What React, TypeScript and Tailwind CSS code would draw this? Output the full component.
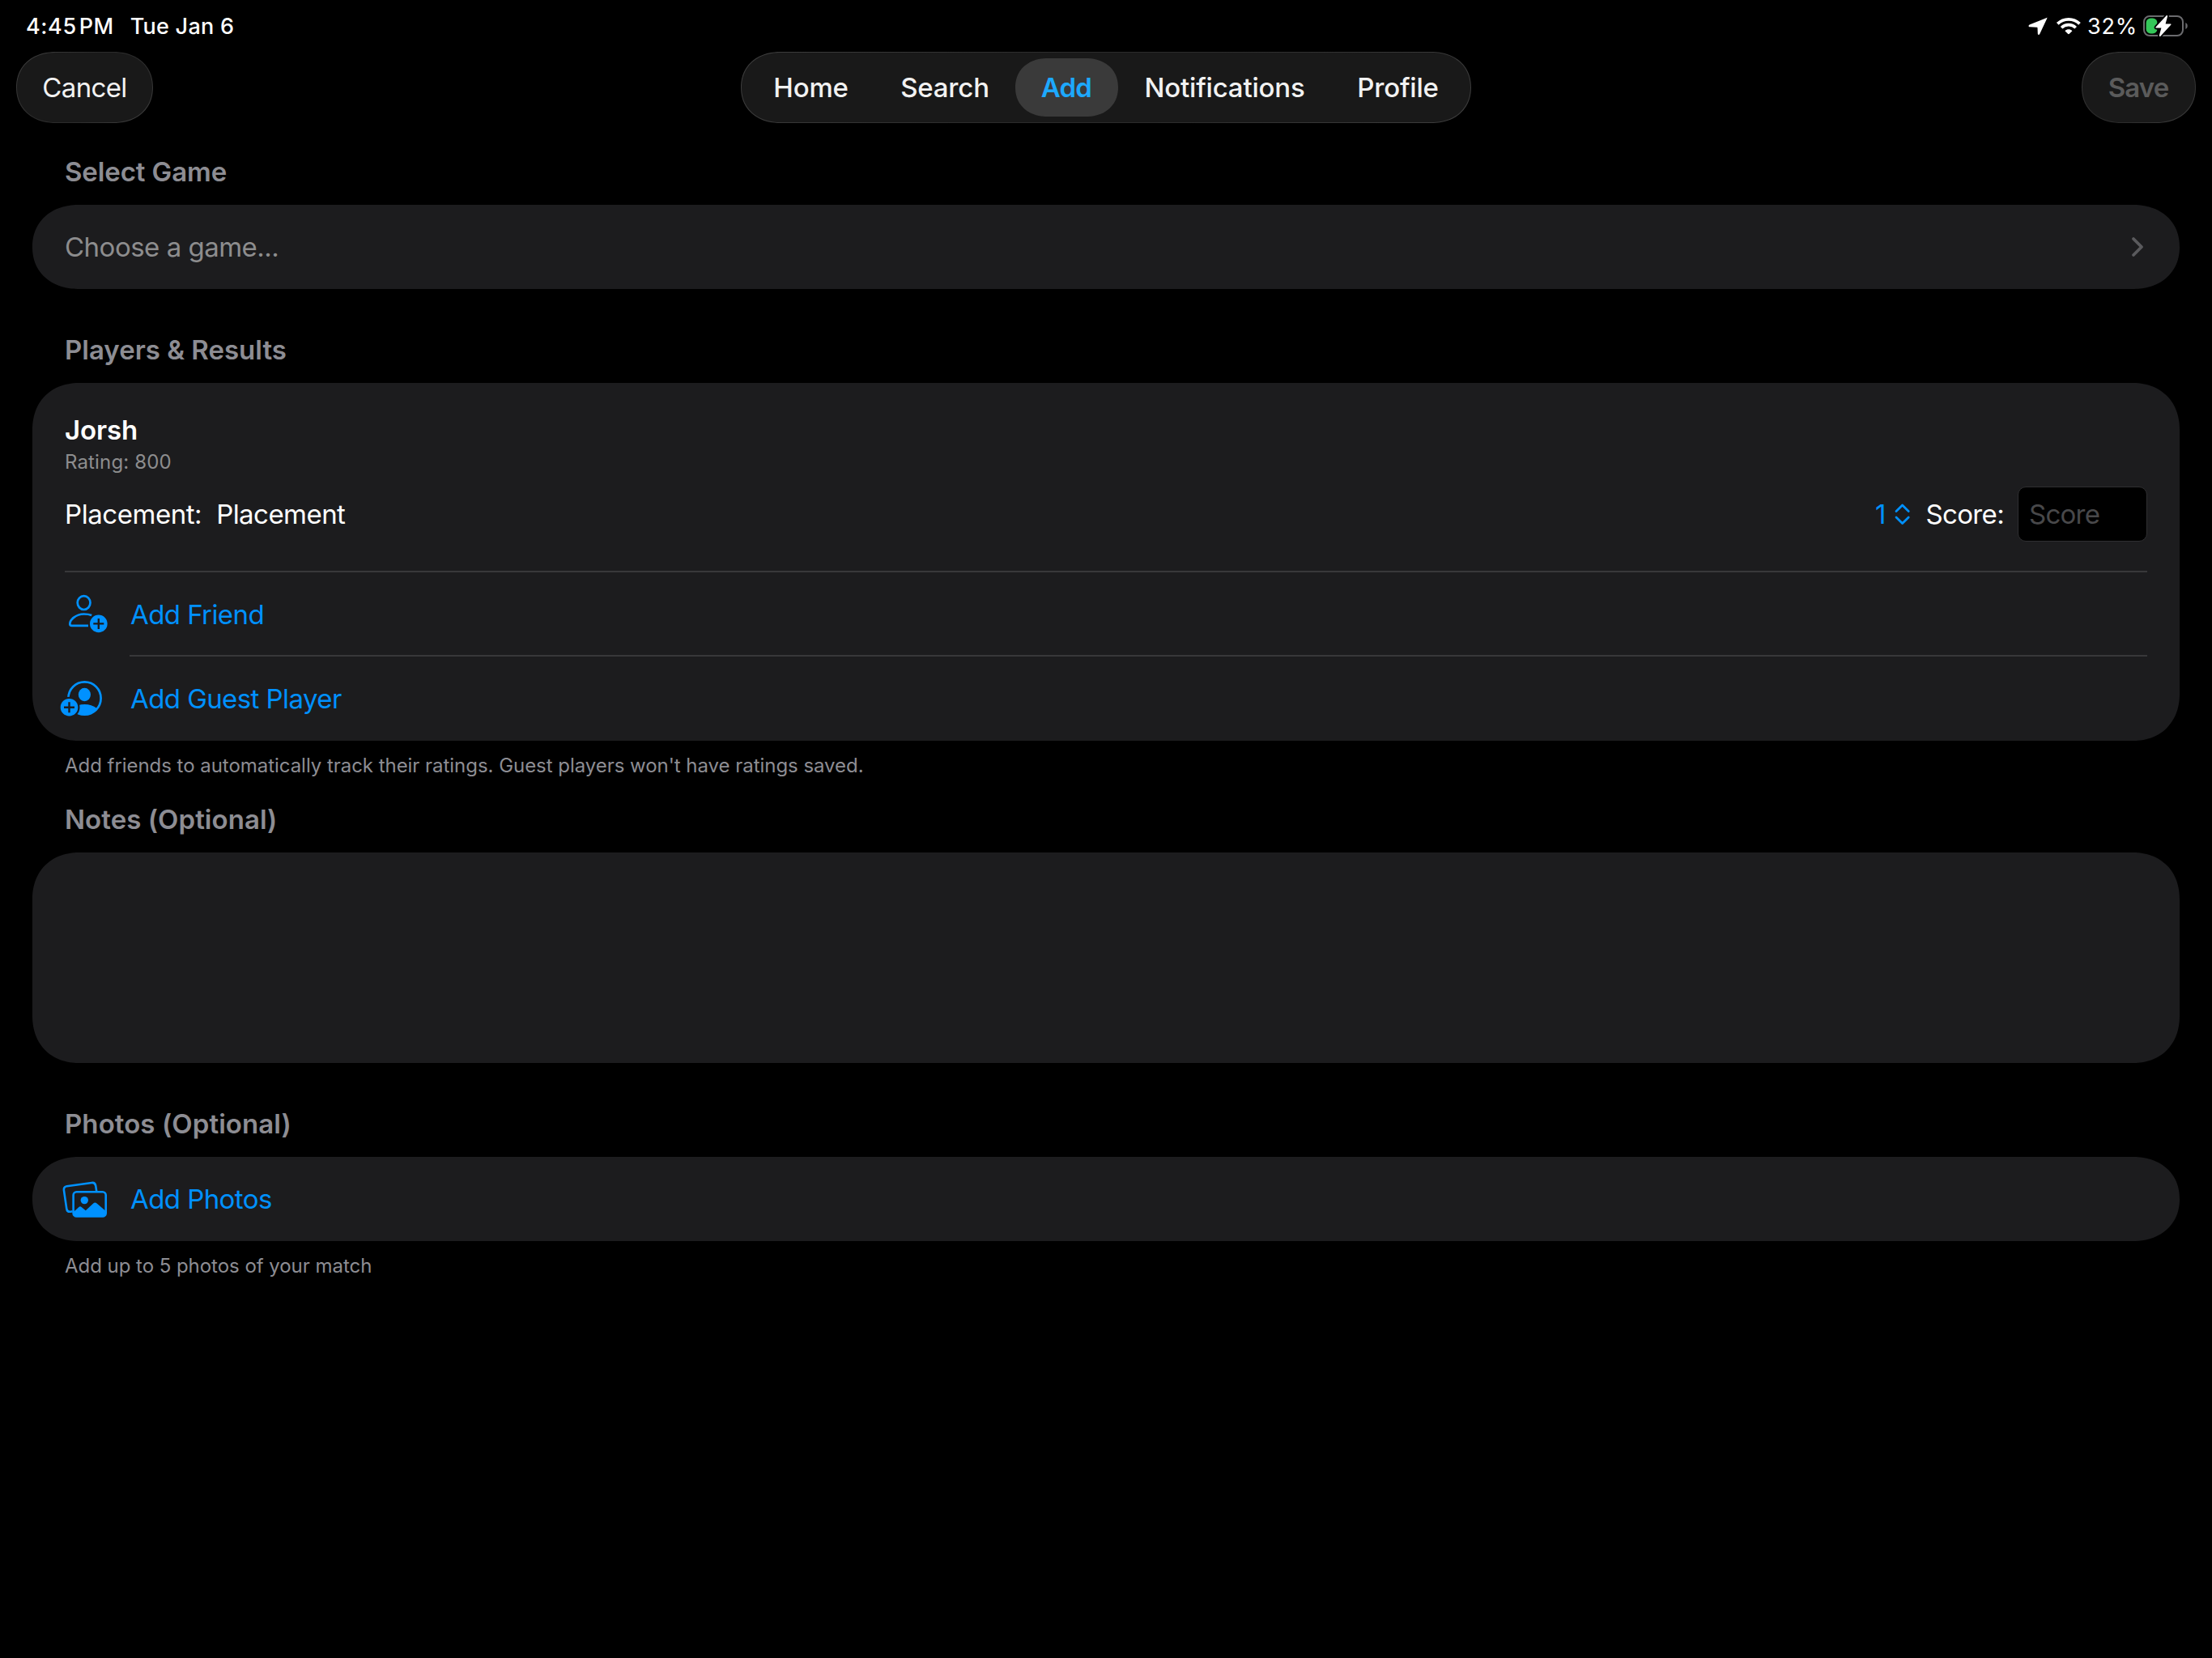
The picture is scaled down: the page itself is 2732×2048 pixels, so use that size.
import type { ReactNode } from 'react'

const glass =
  'border-[1.5px] border-transparent [background:linear-gradient(#191919,#191919)_padding-box,linear-gradient(135deg,#3e3e3e,#2b2b2b_40%,#2b2b2b_60%,#3e3e3e)_border-box] rounded-[49px/44px] [corner-shape:superellipse(1.12)]'

const tabs = [
  { label: 'Home', width: 'w-[158px]' },
  { label: 'Search', width: 'w-[173px]' },
  { label: 'Add', width: 'w-[127px]', active: true },
  { label: 'Notifications', width: 'w-[264px]' },
  { label: 'Profile', width: 'w-[164px]' },
]

function StatusBar() {
  return (
    <div className="flex h-16 items-center justify-between pl-8 pr-7 text-[27px] font-[480] leading-8">
      <div className="flex pt-px">
        <span className="tracking-[0.6px]">4:45</span>
        <span className="ml-[3px] tracking-[0.5px]">PM</span>
        <span className="ml-5 tracking-[0.25px]">Tue Jan 6</span>
      </div>
      <div className="flex items-center">
        <svg width="66" height="32" viewBox="0 0 66 32" fill="none">
          <path
            d="M22.9 5.9 1.6 14.6C-.1 15.4.3 17.2 2.1 17.3L10.7 17.7C11.3 17.7 11.5 17.9 11.5 18.5L11.8 25.8C11.9 27.2 13.5 27.4 14.2 26L22.9 7.4C23.6 6 23.6 5.6 22.9 5.9Z"
            fill="#fff"
          />
          <g stroke="#fff" strokeWidth="3.7">
            <path d="M36.3 13.4C43.8 5.9 56 5.9 63.5 13.4" />
            <path d="M41.1 18.3C46 13.5 53.8 13.5 58.7 18.3" />
          </g>
          <path d="M49 25.8 45.4 22.2C48 19.6 51.8 19.6 54.4 22.2L50.8 25.8C50.2 26.4 49.6 26.4 49 25.8Z" fill="#fff" />
        </svg>
        <span className="ml-[7px] pt-px font-[440] tracking-[0.8px]">32%</span>
        <svg className="ml-[6px]" width="58" height="32" viewBox="0 0 58 32" fill="none">
          <rect x="2" y="4" width="48" height="24" rx="7" stroke="#6b6b6e" strokeWidth="2" />
          <path d="M53.3 12C56.6 13.2 56.6 18.8 53.3 20Z" fill="#6b6b6e" />
          <rect x="4.6" y="6.6" width="13.8" height="18.8" rx="5.5" fill="#34c759" />
          <path
            d="M29.4 3.4 16.7 17.2C16.1 18 16.4 18.6 17.3 18.6H23.4L20.9 27.6C20.6 29 21.6 29.5 22.6 28.4L35.2 14.8C35.9 14 35.5 13.4 34.6 13.4H28.6L31 4.4C31.3 3 30.3 2.5 29.4 3.4Z"
            fill="#fff"
            stroke="#000"
            strokeWidth="3.6"
            paintOrder="stroke"
          />
        </svg>
      </div>
    </div>
  )
}

function NavBar() {
  return (
    <div className="grid h-[88px] grid-cols-[1fr_auto_1fr] px-5 text-[33px] leading-10 text-[#f2f2f2]">
      <button className={`${glass} h-[88px] w-[169px] tracking-[-0.62px]`}>Cancel</button>
      <nav className={`${glass} flex h-[88px] w-[902px] items-center justify-center font-medium tracking-[-0.2px]`}>
        {tabs.map((t) => (
          <button
            key={t.label}
            className={`h-[72px] pr-px ${t.width} ${
              t.active
                ? 'rounded-[40px/36px] bg-[#3a3a3a] font-semibold tracking-[-0.8px] text-[#1da9ff] [corner-shape:superellipse(1.12)]'
                : ''
            }`}
          >
            {t.label}
          </button>
        ))}
      </nav>
      <button className={`${glass} h-[88px] w-[141px] justify-self-end pr-px font-semibold tracking-[-0.85px] text-[#5b5b5b]`}>
        Save
      </button>
    </div>
  )
}

function SectionHeader({ children, className = '' }: { children: ReactNode; className?: string }) {
  return (
    <h2 className={`mb-[17px] h-12 px-10 text-[33px] font-semibold leading-[48px] text-[#8d8d93] ${className}`}>
      {children}
    </h2>
  )
}

function Footer({ children }: { children: ReactNode }) {
  return <p className="mt-[15px] h-8 px-10 text-[24px] leading-8 tracking-[-0.04px] text-[#8d8d93]">{children}</p>
}

function PersonAddIcon() {
  return (
    <svg width="88" height="56" viewBox="0 0 88 56" fill="none" stroke="#0091ff" strokeWidth="2.7">
      <ellipse cx="31.6" cy="13.6" rx="7.9" ry="8.4" />
      <path d="M41.2 29C38.4 27.9 35 27.5 31.6 27.5C21 27.5 14.3 35.2 14.3 39.4C14.3 41 15.1 41.8 16.6 41.8H37" />
      <circle cx="49.8" cy="39.4" r="10.8" fill="#0091ff" stroke="none" />
      <path d="M43.3 39.4H56.3M49.8 32.9V45.9" stroke="#1c1c1e" strokeWidth="2.4" />
    </svg>
  )
}

function GuestAddIcon() {
  return (
    <svg width="88" height="56" viewBox="0 0 88 56" fill="none">
      <defs>
        <clipPath id="guest-ring">
          <circle cx="32.5" cy="27.5" r="20.6" />
        </clipPath>
      </defs>
      <circle cx="32.5" cy="27.5" r="20.1" stroke="#0091ff" strokeWidth="2.7" />
      <ellipse cx="32.4" cy="23" rx="7.6" ry="8.2" fill="#0091ff" />
      <ellipse cx="32.5" cy="51" rx="21" ry="16" fill="#0091ff" clipPath="url(#guest-ring)" />
      <circle cx="13.5" cy="38.7" r="13" fill="#1c1c1e" />
      <circle cx="13.5" cy="38.7" r="10.8" fill="#0091ff" />
      <path d="M7 38.7H20M13.5 32.2V45.2" stroke="#1c1c1e" strokeWidth="2.4" />
    </svg>
  )
}

function PhotosIcon() {
  return (
    <svg width="88" height="56" viewBox="0 0 88 56" fill="none" stroke="#0091ff" strokeWidth="2.6">
      <path d="M47.2 18.4 46.2 11.8C45.7 9 44 7.6 41.3 8L10.6 12.3C7.8 12.7 6.5 14.4 6.9 17.1L10.3 40.2C10.7 43 12.4 44 15 43.7L17.6 43.3" />
      <rect x="18.6" y="19.3" width="40.1" height="30.2" rx="4" />
      <circle cx="32.3" cy="29.6" r="4.7" fill="#0091ff" stroke="none" />
      <path
        d="M18.6 44.2 25.4 37.9C26.4 37 27.6 37 28.6 37.9L33.8 42.2 43.2 33.4C44.6 32.2 46.2 32.2 47.6 33.4L58.7 43V46C58.7 48.3 57.5 49.5 55.2 49.5H22C19.8 49.5 18.6 48.3 18.6 46Z"
        fill="#0091ff"
        stroke="none"
      />
    </svg>
  )
}

function ActionRow({ icon, label }: { icon: ReactNode; label: string }) {
  return (
    <button className="flex h-[104px] w-full items-center pl-8 pr-10 text-left text-[#0091ff]">
      {icon}
      <span className="ml-px tracking-[-0.58px]">{label}</span>
    </button>
  )
}

function PlayerRow() {
  return (
    <div className="h-[232px] px-10 pt-[38px]">
      <div className="h-10 font-semibold tracking-[-0.1px]">Jorsh</div>
      <div className="mt-[5px] h-[29px] text-[24px] leading-[30px] tracking-[0.15px] text-[#8d8d8e]">Rating: 800</div>
      <div className="mt-4 flex h-[68px] items-center">
        <span className="tracking-[-0.45px]">Placement:</span>
        <span className="ml-[18px] tracking-[-0.55px]">Placement</span>
        <span className="ml-auto text-[#0091ff]">1</span>
        <svg
          className="ml-[10px]"
          width="21"
          height="28"
          viewBox="0 0 21 28"
          fill="none"
          stroke="#0091ff"
          strokeWidth="2.8"
          strokeLinecap="round"
          strokeLinejoin="round"
        >
          <path d="M3 10.4 10.6 3 18.2 10.4M3 18 10.6 25.4 18.2 18" />
        </svg>
        <span className="ml-[18px] tracking-[-0.65px]">Score:</span>
        <input
          className="ml-[17px] h-[68px] w-[160px] rounded-[10px] border border-[#2f2f31] bg-black px-[13px] tracking-[-0.75px] placeholder:text-[#48484a]"
          placeholder="Score"
        />
      </div>
    </div>
  )
}

export default function App() {
  const card = 'bg-[#1c1c1e] [corner-shape:superellipse(1.12)]'

  return (
    <main className="min-h-[2048px] bg-black font-['Inter','Liberation_Sans',sans-serif] text-white">
      <StatusBar />
      <NavBar />
      <div className="px-10 pt-9 text-[33px] leading-10">
        <SectionHeader className="tracking-[-0.1px]">Select Game</SectionHeader>
        <button
          className={`${card} flex h-[104px] w-full items-center justify-between rounded-[58px/52px] pl-10 pr-[43px] text-[#8d8d8e]`}
        >
          <span className="tracking-[-0.5px]">Choose a game...</span>
          <svg width="18" height="28" viewBox="0 0 18 28" fill="none" stroke="#5a5a5d" strokeWidth="3.8" strokeLinecap="round" strokeLinejoin="round">
            <path d="M4 4 14 14 4 24" />
          </svg>
        </button>

        <SectionHeader className="mt-[51px]">Players &amp; Results</SectionHeader>
        <div className={`${card} rounded-[58px]`}>
          <PlayerRow />
          <div className="mx-10 h-0.5 bg-[#38383a]" />
          <div className="relative">
            <ActionRow icon={<PersonAddIcon />} label="Add Friend" />
            <div className="absolute bottom-0 left-[120px] right-10 h-0.5 bg-[#38383a]" />
          </div>
          <ActionRow icon={<GuestAddIcon />} label="Add Guest Player" />
        </div>
        <Footer>Add friends to automatically track their ratings. Guest players won't have ratings saved.</Footer>

        <SectionHeader className="mt-[26px] tracking-[0.05px]">Notes (Optional)</SectionHeader>
        <textarea className={`${card} block h-[260px] w-full resize-none rounded-[58px] p-10`} />

        <SectionHeader className="mt-[51px] tracking-[0.07px]">Photos (Optional)</SectionHeader>
        <div className={`${card} rounded-[58px/52px]`}>
          <ActionRow icon={<PhotosIcon />} label="Add Photos" />
        </div>
        <Footer>Add up to 5 photos of your match</Footer>
      </div>
    </main>
  )
}
